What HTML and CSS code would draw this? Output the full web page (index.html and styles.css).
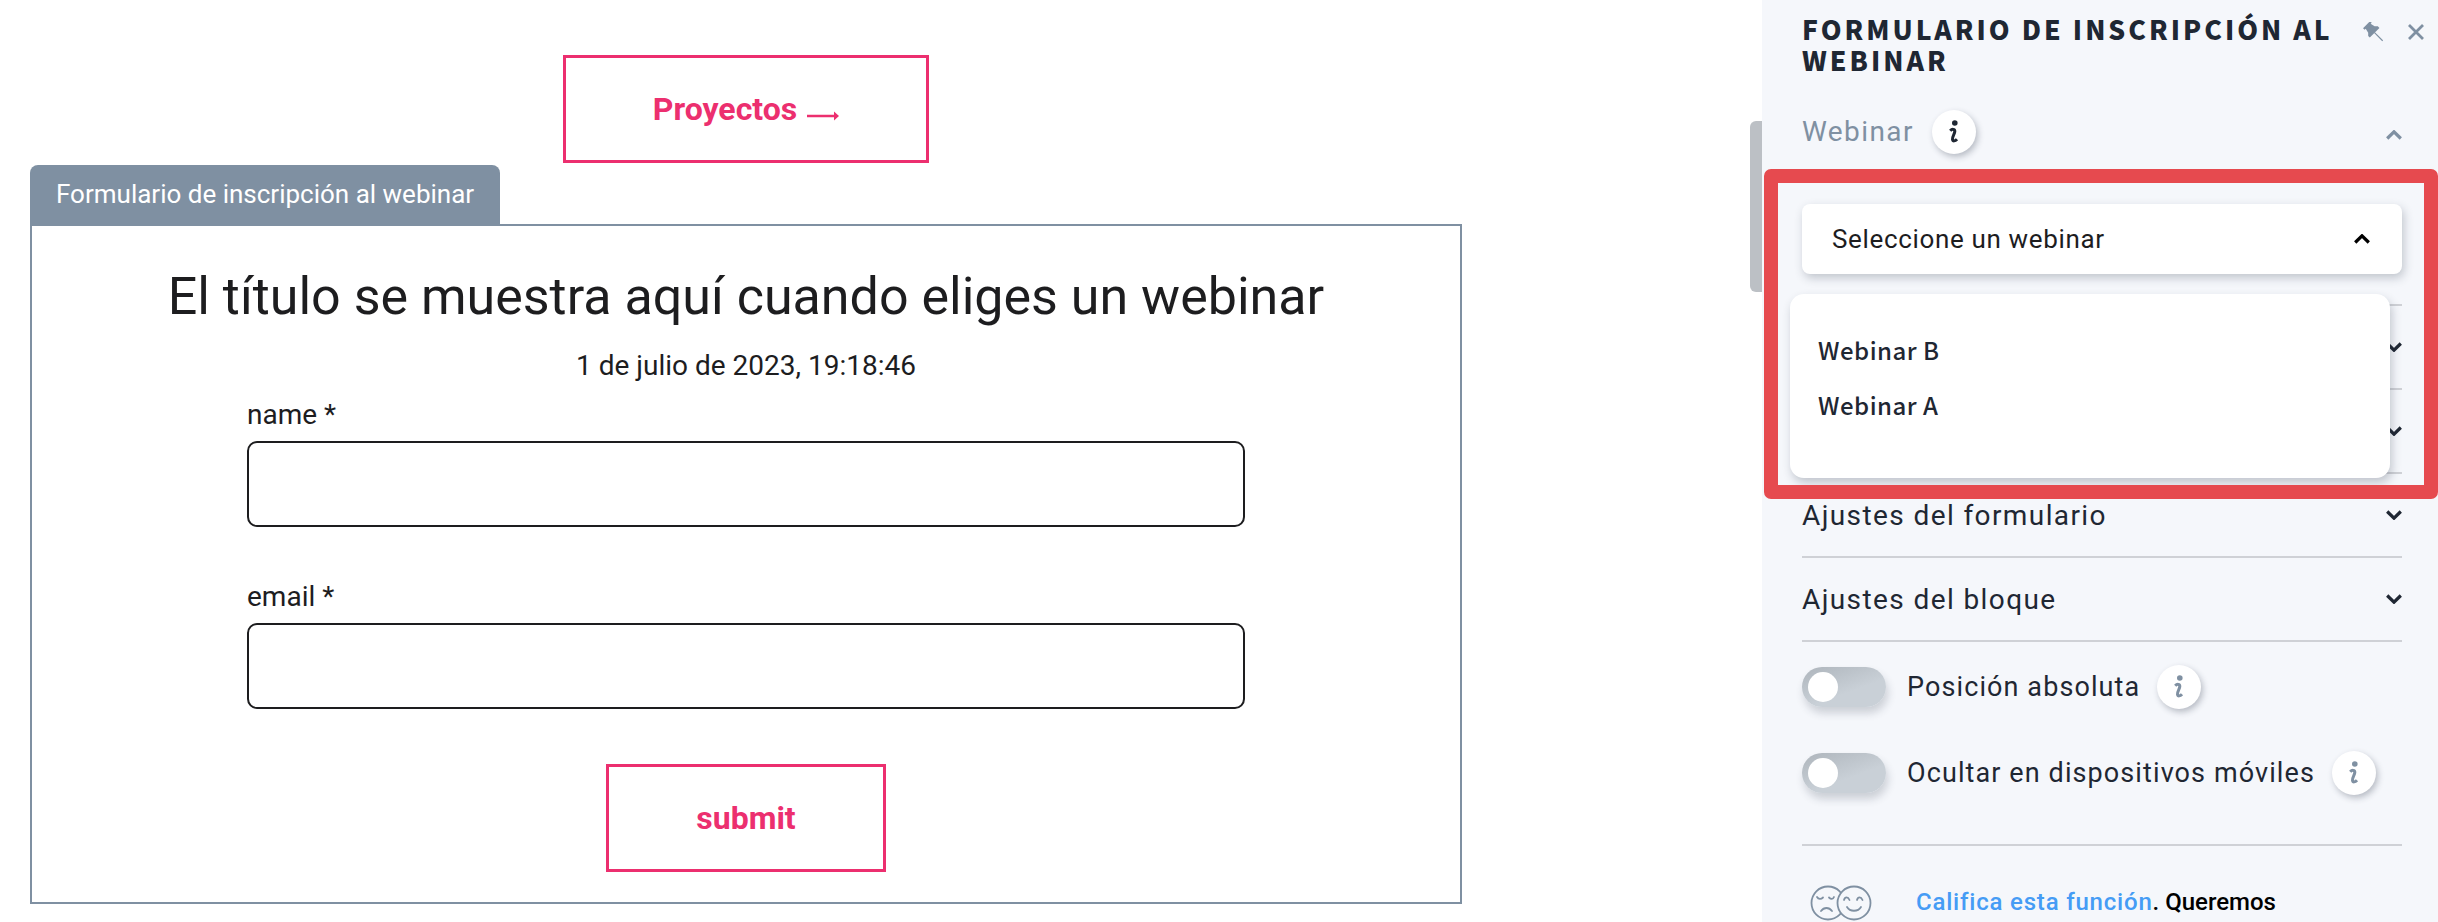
FILE: index.html
```html
<!DOCTYPE html>
<html>
<head>
    <title>Formulario de inscripción al webinar</title>
    <link rel="stylesheet" href="styles.css">
    <meta charset="UTF-8">
</head>
<body>
    <svg class="icon-defs" width="0" height="0">
        <symbol id="chevron-down" viewBox="0 0 16 10">
            <path d="M1.2 1.500L8 8.200l6.800-6.700" fill="none" stroke="currentColor" stroke-width="3.200"/>
        </symbol>
        <symbol id="chevron-up" viewBox="0 0 16 10">
            <path d="M1.200 8.500L8 1.800l6.800 6.700" fill="none" stroke="currentColor" stroke-width="3.200"/>
        </symbol>
        <symbol id="info" viewBox="0 0 10 24">
            <circle cx="5.800" cy="3" r="2.800"/>
            <path d="M1.200 10.800C3 8.800 6 8.800 5.800 11.500 5.500 14.500 3.200 16.500 3.500 19.300 3.800 21.500 6.200 21.300 8 19.300" fill="none" stroke-width="3" stroke="currentColor"/>
        </symbol>
    </svg>

    <div class="main">
        <div class="link-row">
            <a class="pink-button project-button">Proyectos
                <svg class="arrow" width="32" height="12" viewBox="0 0 32 12"><path d="M0 6h28" fill="none" stroke="currentColor" stroke-width="2.500"/><path d="M27 1.500L32 6l-5 4.500z" fill="currentColor"/></svg>
            </a>
        </div>

        <div class="block-tab">Formulario de inscripción al webinar</div>
        <div class="block">
            <h1>El título se muestra aquí cuando eliges un webinar</h1>
            <p class="date">1 de julio de 2023, 19:18:46</p>
            <form class="signup">
                <label for="nameInput">name *</label>
                <input type="text" id="nameInput">
                <label for="emailInput">email *</label>
                <input type="text" id="emailInput">
                <button type="button" class="pink-button submit-button">submit</button>
            </form>
        </div>
    </div>

    <div class="scroll-track"><div class="scroll-thumb"></div></div>

    <div class="sidebar">
        <div class="sidebar-head">
            <h2>FORMULARIO DE INSCRIPCIÓN AL WEBINAR</h2>
            <div class="head-icons">
                <svg class="pin" width="20" height="20" viewBox="-2 -2 22 22">
                    <g transform="translate(9 8) rotate(-45)">
                        <path d="M-5.500-10H5.500V-7.500H3.800L5-2.500 7.500 0V2.500H-7.500V0L-5-2.500-3.800-7.500H-5.500z" fill="#7f90a2"/>
                        <path d="M0 2v13" stroke="#7f90a2" stroke-width="1.300"/>
                    </g>
                </svg>
                <svg class="close" width="16" height="16" viewBox="0 0 16 16"><path d="M1 1l14 14M15 1L1 15" stroke="#7f90a2" stroke-width="2.800"/></svg>
            </div>
        </div>

        <div class="webinar-head">
            <span class="webinar-title">Webinar</span>
            <span class="info-dot dark"><svg width="10" height="24"><use href="#info"/></svg></span>
            <svg class="chevron muted" width="16" height="10"><use href="#chevron-up"/></svg>
        </div>

        <div class="select-box">
            <span>Seleccione un webinar</span>
            <svg class="chevron black" width="16" height="10"><use href="#chevron-up"/></svg>
        </div>
        <div class="rule first-rule"></div>

        <div class="row"><span></span><svg class="chevron" width="16" height="10"><use href="#chevron-down"/></svg></div>
        <div class="row"><span></span><svg class="chevron" width="16" height="10"><use href="#chevron-down"/></svg></div>
        <div class="row"><span>Ajustes del formulario</span><svg class="chevron" width="16" height="10"><use href="#chevron-down"/></svg></div>
        <div class="row"><span>Ajustes del bloque</span><svg class="chevron" width="16" height="10"><use href="#chevron-down"/></svg></div>

        <div class="toggle-row">
            <span class="toggle"><span class="knob"></span></span>
            <span class="toggle-label">Posición absoluta</span>
            <span class="info-dot"><svg width="10" height="24"><use href="#info"/></svg></span>
        </div>
        <div class="toggle-row">
            <span class="toggle"><span class="knob"></span></span>
            <span class="toggle-label">Ocultar en dispositivos móviles</span>
            <span class="info-dot"><svg width="10" height="24"><use href="#info"/></svg></span>
        </div>

        <div class="rule rate-rule"></div>
        <div class="rate">
            <svg class="faces" width="62" height="36" viewBox="0 0 62 36" fill="none" stroke="#7f90a2" stroke-width="1.800" stroke-linecap="round">
                <circle cx="18" cy="18" r="16.500"/>
                <circle cx="44" cy="18" r="16.500" fill="#f5f7fb"/>
                <path d="M7 12c1.500 2.500 4 2.500 6 .5M19 12.500c2 2 4 2 5-.5M11 26c3-4 8-4 11 0"/>
                <path d="M34 15c1-3.500 4-3.500 5.500 0M47 15c1-3.500 4-3.500 5.500 0M37 22c3 5 11 5 14 0"/>
            </svg>
            <p><a class="rate-link">Califica esta función</a><b>. Queremos</b></p>
        </div>

        <div class="dropdown">
            <div class="dropdown-item">Webinar B</div>
            <div class="dropdown-item">Webinar A</div>
        </div>
        <div class="highlight"></div>
    </div>
</body>
</html>
```

FILE: styles.css
```css
html, body {
    height: 922px;
    overflow: hidden;
}

body {
    margin: 0;
    display: flex;
    background-color: #fff;
    font-family: Roboto, sans-serif;
    color: #1d1d1f;
}

.icon-defs {
    position: absolute;
}

/* left side, page preview */
.main {
    width: 1750px;
    flex-shrink: 0;
    padding: 55px 0 0 30px;
    box-sizing: border-box;
}

.link-row {
    width: 1432px;
    display: flex;
    justify-content: center;
    margin-bottom: 2px;
}

.pink-button {
    display: flex;
    align-items: center;
    justify-content: center;
    box-sizing: border-box;
    height: 108px;
    border: 3px solid #ec2f6f;
    background: #fff;
    color: #ec2f6f;
    font-family: Roboto, sans-serif;
    font-size: 32px;
    font-weight: 700;
}

.project-button {
    width: 366px;
    gap: 10px;
}

.arrow {
    margin-top: 13px;
}

.block-tab {
    width: 470px;
    height: 59px;
    box-sizing: border-box;
    padding: 0 0 2px 26px;
    display: flex;
    align-items: center;
    background-color: #7f90a2;
    border-radius: 8px 8px 0 0;
    color: #fff;
    font-size: 26px;
}

.block {
    width: 1432px;
    height: 680px;
    box-sizing: border-box;
    border: 2px solid #7f90a2;
    text-align: center;
}

.block h1 {
    margin: 41px 0 0;
    font-size: 52px;
    font-weight: 400;
    line-height: 60px;
}

.date {
    margin: 19px 0 0;
    font-size: 28px;
    line-height: 40px;
}

.signup {
    width: 998px;
    margin: 0 auto;
    display: flex;
    flex-direction: column;
    text-align: left;
}

.signup label {
    font-size: 28px;
    line-height: 36px;
    margin-top: 11px;
}

.signup label + input {
    margin-top: 8px;
}

.signup input {
    height: 86px;
    box-sizing: border-box;
    margin-bottom: 52px;
    border: 2px solid #1d1d1f;
    border-radius: 10px;
    background: #fff;
}

.signup input + label {
    margin-top: 0;
}

.submit-button {
    width: 280px;
    align-self: center;
    margin-top: 3px;
    padding: 0;
}

/* scrollbar between preview and sidebar */
.scroll-track {
    width: 12px;
    flex-shrink: 0;
}

.scroll-thumb {
    height: 171px;
    margin-top: 121px;
    border-radius: 6px 0 0 6px;
    background-color: #bcc0c5;
}

/* right side, settings */
.sidebar {
    position: relative;
    width: 676px;
    height: 922px;
    flex-shrink: 0;
    box-sizing: border-box;
    padding: 0 36px 0 40px;
    background-color: #f5f7fb;
    color: #1f2733;
    overflow: hidden;
}

.sidebar-head {
    position: relative;
    height: 76px;
    padding-top: 13px;
    box-sizing: border-box;
}

.sidebar-head h2 {
    width: 545px;
    margin: 0;
    font-family: "Noto Sans CJK JP", "Open Sans", sans-serif;
    font-size: 26.500px;
    font-weight: 900;
    line-height: 31px;
    letter-spacing: 3px;
    color: #1f2733;
}

.head-icons {
    position: absolute;
    top: 22px;
    right: -22px;
    display: flex;
    align-items: center;
    gap: 25px;
}

.webinar-head {
    position: relative;
    height: 128px;
    box-sizing: border-box;
    display: flex;
    align-items: flex-start;
    padding-top: 34px;
    gap: 18px;
}

.webinar-title {
    font-size: 28px;
    line-height: 44px;
    letter-spacing: 1.400px;
    color: #7f90a2;
}

.webinar-head .chevron {
    position: absolute;
    right: 0;
    top: 54px;
}

.chevron {
    color: #1f2733;
}

.chevron.muted {
    color: #7f90a2;
}

.chevron.black {
    color: #000;
}

.info-dot {
    width: 44px;
    height: 44px;
    display: flex;
    align-items: center;
    justify-content: center;
    border-radius: 50%;
    background: #fff;
    box-shadow: 2px 3px 6px rgba(40, 50, 70, 0.3);
    color: #7f90a2;
    fill: #7f90a2;
}

.info-dot.dark {
    color: #1f2733;
    fill: #1f2733;
}

.select-box {
    height: 70px;
    box-sizing: border-box;
    padding: 0 32px 0 30px;
    display: flex;
    align-items: center;
    justify-content: space-between;
    background: #fff;
    border-radius: 8px;
    box-shadow: 2px 4px 10px rgba(40, 50, 70, 0.25);
    font-size: 26px;
    letter-spacing: 0.650px;
    color: #1d1d1f;
}

.rule {
    height: 2px;
    background-color: #cfd1d6;
}

.first-rule {
    margin-top: 30px;
}

.row {
    height: 84px;
    box-sizing: border-box;
    border-bottom: 2px solid #cfd1d6;
    display: flex;
    align-items: center;
    justify-content: space-between;
    font-size: 28px;
    letter-spacing: 1.400px;
}

.toggle-row {
    height: 44px;
    margin-top: 23px;
    display: flex;
    align-items: center;
    font-size: 27px;
    letter-spacing: 1.100px;
}

.toggle-row + .toggle-row {
    margin-top: 42px;
}

.toggle {
    width: 84px;
    height: 40px;
    box-sizing: border-box;
    padding: 5px 6px;
    border-radius: 20px;
    background: linear-gradient(160deg, #aeb5bc, #c9d0d7 60%);
    box-shadow: 2px 6px 8px rgba(40, 50, 70, 0.2);
}

.knob {
    display: block;
    width: 30px;
    height: 30px;
    border-radius: 50%;
    background: #fff;
}

.toggle-label {
    margin: 0 17px 0 21px;
}

.rate-rule {
    margin-top: 49px;
}

.rate {
    display: flex;
    align-items: flex-start;
    margin-top: 39px;
    padding-left: 8px;
}

.rate p {
    margin: 0 0 0 44px;
    font-size: 24px;
    line-height: 34px;
    white-space: nowrap;
}

.rate-link {
    color: #459cf5;
    font-weight: 500;
    letter-spacing: 0.800px;
}

.rate b {
    font-weight: 500;
    color: #000;
}

/* open select menu, drawn over the rows */
.dropdown {
    position: absolute;
    left: 28px;
    top: 294px;
    width: 600px;
    height: 184px;
    box-sizing: border-box;
    padding: 28px 28px;
    background: #fff;
    border-radius: 14px;
    box-shadow: 2px 5px 10px rgba(40, 50, 70, 0.25);
}

.dropdown-item {
    height: 55px;
    line-height: 55px;
    font-family: "Noto Sans CJK JP", "Open Sans", sans-serif;
    font-size: 24px;
    font-weight: 500;
    letter-spacing: 0.500px;
    color: #1f2733;
}

/* red annotation frame */
.highlight {
    position: absolute;
    left: 2px;
    top: 169px;
    width: 674px;
    height: 330px;
    box-sizing: border-box;
    border: 14px solid #e64a4f;
    border-radius: 7px;
}
```
